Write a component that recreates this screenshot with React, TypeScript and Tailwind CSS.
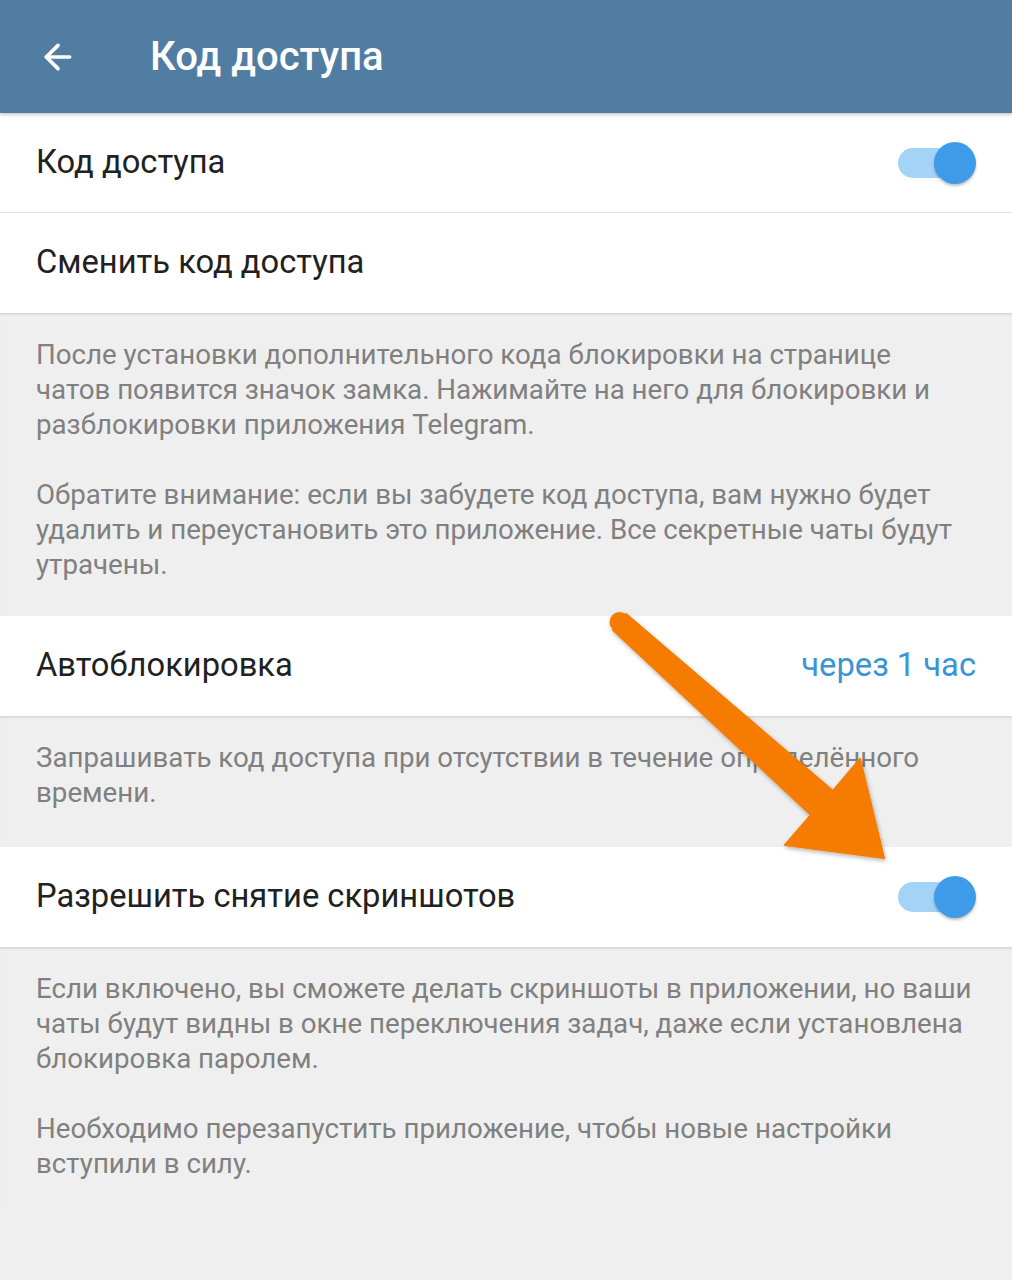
import React from "react";
import { ArrowLeft } from "lucide-react";

function Toggle() {
  return (
    <div className="relative w-[78px] h-[44px] flex items-center">
      <div className="w-[62px] h-[30px] rounded-full bg-[#a3d3f7]" />
      <div className="absolute right-[0px] top-[1px] w-[42px] h-[42px] rounded-full bg-[#3d9be9] shadow-[0_2px_3px_rgba(0,0,0,0.25)]" />
    </div>
  );
}

function Row({ label, right, border }: { label: string; right?: React.ReactNode; border?: boolean }) {
  return (
    <div className={"h-[100px] flex items-center justify-between pl-[36px] pr-[36px] bg-white " + (border ? "border-b border-[#e3e3e3]" : "")}>
      <span className="text-[32.7px] text-[#212121]">{label}</span>
      {right}
    </div>
  );
}

function Hint({ children, cls }: { children: React.ReactNode; cls: string }) {
  return (
    <div className={"bg-[#efefef] pt-[24px] pl-[36px] text-[27.7px] leading-[35px] text-[#808080] shadow-[inset_0_3px_3px_-2px_rgba(0,0,0,0.15)] " + cls}>
      {children}
    </div>
  );
}

export default function App() {
  return (
    <div className="relative w-[1012px] h-[1280px] bg-[#efefef] overflow-hidden font-['Roboto',sans-serif]">
      <div className="h-[113px] bg-[#527da3] flex items-center shadow-[0_2px_3px_rgba(0,0,0,0.2)] relative z-10">
        <ArrowLeft className="ml-[38px] text-white" size={40} strokeWidth={2.2} />
        <span className="ml-[72px] text-white text-[40px] font-medium">Код доступа</span>
      </div>

      <Row label="Код доступа" border right={<Toggle />} />
      <Row label="Сменить код доступа" />
      <Hint cls="pb-[34px] pr-[48px]">
        <p>После установки дополнительного кода блокировки на странице чатов появится значок замка. Нажимайте на него для блокировки и разблокировки приложения Telegram.</p>
        <p className="mt-[35px]">Обратите внимание: если вы забудете код доступа, вам нужно будет удалить и переустановить это приложение. Все секретные чаты будут утрачены.</p>
      </Hint>

      <Row label="Автоблокировка" right={<span className="text-[32.7px] text-[#3a95d5]">через 1 час</span>} />
      <Hint cls="pb-[37px] pr-[28px]">
        <p>Запрашивать код доступа при отсутствии в течение определённого времени.</p>
      </Hint>

      <Row label="Разрешить снятие скриншотов" right={<Toggle />} />
      <Hint cls="pb-[34px] pr-[28px]">
        <p>Если включено, вы сможете делать скриншоты в приложении, но ваши чаты будут видны в окне переключения задач, даже если установлена блокировка паролем.</p>
        <p className="mt-[35px]">Необходимо перезапустить приложение, чтобы новые настройки вступили в силу.</p>
      </Hint>

      <svg className="absolute left-0 top-0 pointer-events-none" width="1012" height="1280">
        <defs>
          <filter id="sh" x="-10%" y="-10%" width="120%" height="120%">
            <feDropShadow dx="1" dy="2" stdDeviation="2" floodOpacity="0.3" />
          </filter>
        </defs>
        <g filter="url(#sh)" fill="#f57c00">
          <polygon points="626,614 833,791 860,759 884,858 785,845 811,815 613,630" strokeLinejoin="round" stroke="#f57c00" strokeWidth="2" />
          <circle cx="619.5" cy="622" r="10" />
        </g>
      </svg>
    </div>
  );
}
